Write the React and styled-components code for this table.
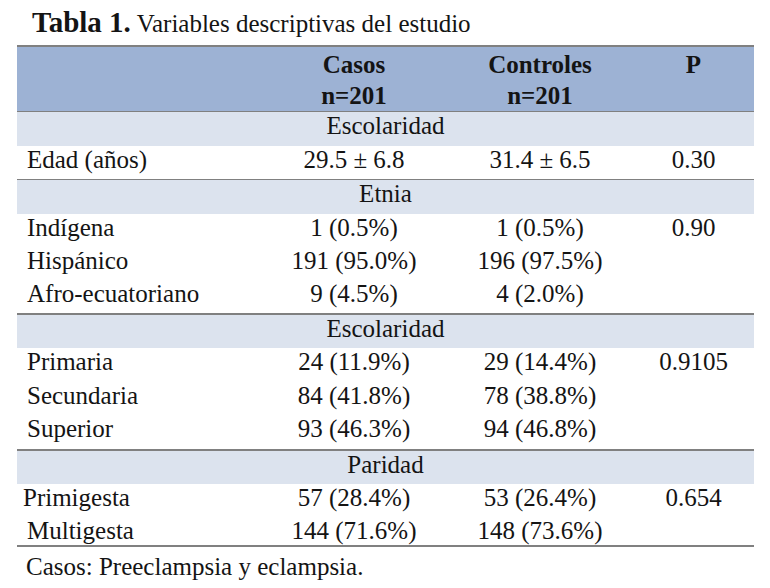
import React from 'react';
import styled, { createGlobalStyle } from 'styled-components';

const Global = createGlobalStyle`
  html, body { margin: 0; padding: 0; background: #fff; }
  body {
    font-family: "Liberation Serif", "Times New Roman", serif;
    color: #141414;
  }
`;

const COLS = '244px 186px 186px 121px';
const RULE = '#808080';

const Page = styled.div`
  width: 737px;
  padding-left: 17px;
`;

const Title = styled.div`
  height: 45px;
  box-sizing: border-box;
  padding: 8px 0 0 15px;
  font-size: 25px;
  line-height: 28px;
  white-space: nowrap;
`;

const TitleLead = styled.b`
  font-size: 29px;
  font-weight: 700;
`;

const Header = styled.div`
  display: grid;
  grid-template-columns: ${COLS};
  height: 62px;
  padding-top: 2px;
  background: #9db2d4;
  border-top: 2px solid ${RULE};
  border-bottom: 1px solid ${RULE};
  font-size: 25px;
  line-height: 31px;
  font-weight: 700;
`;

const HeadCell = styled.div`
  text-align: center;
`;

const Band = styled.div`
  height: ${p => p.$h}px;
  background: #dce3ee;
  text-align: center;
  font-size: 25px;
  line-height: 28px;
`;

const Row = styled.div`
  display: grid;
  grid-template-columns: ${COLS};
  height: ${p => p.$h}px;
  font-size: 25px;
  line-height: 28px;
  border-bottom: ${p => (p.$rule ? `${p.$rule}px solid ${RULE}` : 'none')};
`;

const Label = styled.div`
  padding-left: ${p => p.$indent ?? 10}px;
  padding-top: ${p => p.$top ?? 0}px;
  white-space: nowrap;
`;

const Value = styled.div`
  text-align: center;
  padding-top: ${p => p.$top ?? 0}px;
  white-space: nowrap;
`;

const Note = styled.div`
  padding: 5px 0 0 9px;
  font-size: 25px;
  line-height: 30px;
`;

const sections = [
  {
    title: 'Escolaridad',
    h: 34,
    rule: 1,
    rows: [{ label: 'Edad (años)', a: '29.5 ± 6.8', b: '31.4 ± 6.5', p: '0.30', h: 33 }],
  },
  {
    title: 'Etnia',
    h: 34,
    rule: 2,
    rows: [
      { label: 'Indígena', a: '1 (0.5%)', b: '1 (0.5%)', p: '0.90', h: 33 },
      { label: 'Hispánico', a: '191 (95.0%)', b: '196 (97.5%)', p: '', h: 33 },
      { label: 'Afro-ecuatoriano', a: '9 (4.5%)', b: '4 (2.0%)', p: '', h: 33 },
    ],
  },
  {
    title: 'Escolaridad',
    h: 33,
    rule: 2,
    rows: [
      { label: 'Primaria', a: '24 (11.9%)', b: '29 (14.4%)', p: '0.9105', h: 34 },
      { label: 'Secundaria', a: '84 (41.8%)', b: '78 (38.8%)', p: '', h: 33 },
      { label: 'Superior', a: '93 (46.3%)', b: '94 (46.8%)', p: '', h: 34 },
    ],
  },
  {
    title: 'Paridad',
    h: 33,
    rule: 2,
    rows: [
      { label: 'Primigesta', a: '57 (28.4%)', b: '53 (26.4%)', p: '0.654', h: 31, indent: 6 },
      { label: 'Multigesta', a: '144 (71.6%)', b: '148 (73.6%)', p: '', h: 30, top: 2 },
    ],
  },
];

export default function App() {
  return (
    <>
      <Global />
      <Page>
        <Title>
          <TitleLead>Tabla 1.</TitleLead> Variables descriptivas del estudio
        </Title>
        <Header>
          <HeadCell />
          <HeadCell>Casos<br />n=201</HeadCell>
          <HeadCell>Controles<br />n=201</HeadCell>
          <HeadCell>P</HeadCell>
        </Header>
        {sections.map((s, si) => (
          <React.Fragment key={si}>
            <Band $h={s.h}>{s.title}</Band>
            {s.rows.map((r, ri) => (
              <Row key={ri} $h={r.h} $rule={ri === s.rows.length - 1 ? s.rule : 0}>
                <Label $indent={r.indent} $top={r.top}>{r.label}</Label>
                <Value $top={r.top}>{r.a}</Value>
                <Value $top={r.top}>{r.b}</Value>
                <Value $top={r.top}>{r.p}</Value>
              </Row>
            ))}
          </React.Fragment>
        ))}
        <Note>Casos: Preeclampsia y eclampsia.</Note>
      </Page>
    </>
  );
}
